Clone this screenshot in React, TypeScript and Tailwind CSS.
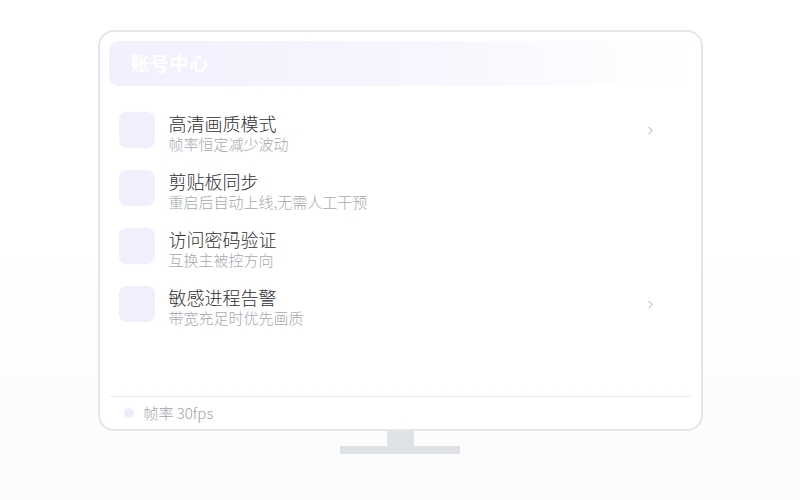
import { ChevronRight } from 'lucide-react';

type Item = { title: string; desc: string; arrow: boolean };

const items: Item[] = [
  { title: '高清画质模式', desc: '帧率恒定减少波动', arrow: true },
  { title: '剪贴板同步', desc: '重启后自动上线,无需人工干预', arrow: false },
  { title: '访问密码验证', desc: '互换主被控方向', arrow: false },
  { title: '敏感进程告警', desc: '带宽充足时优先画质', arrow: true },
];

const font = { fontFamily: '"Noto Sans CJK SC", "Noto Sans", sans-serif' };

const Row = ({ item }: { item: Item }) => (
  <div className="flex items-start gap-[14px] pl-[10px] pr-[35px]">
    <div className="w-[36px] h-[36px] rounded-[8px] bg-[#f2effd] shrink-0" />
    <div className="flex-1 flex flex-col font-light">
      <div className="text-[18px] leading-[22px] text-[#2f3136]">{item.title}</div>
      <div className="text-[15px] leading-[20px] text-[#a6a9b0]">{item.desc}</div>
    </div>
    {item.arrow && (
      <div className="h-[36px] flex items-center">
        <ChevronRight className="w-[13px] h-[13px] text-[#8f939a]" strokeWidth={1.5} />
      </div>
    )}
  </div>
);

export default function App() {
  return (
    <div className="w-[800px] h-[500px] bg-gradient-to-b from-white via-white to-[#fbfbfc] flex flex-col items-center pt-[30px]" style={font}>
      <div className="w-[605px] h-[401px] rounded-[16px] border-2 border-[#e4e6ea] bg-white px-[9px] pt-[9px] flex flex-col">
        <div className="h-[45px] rounded-[10px] bg-gradient-to-r from-[#f3f0fe] via-[#f7f5fe] to-white flex items-center justify-between px-[22px]">
          <span className="text-[19px] font-bold text-white tracking-[0.5px]">账号中心</span>
          <span className="text-[15px] text-white mr-[10px]">设置</span>
        </div>
        <div className="flex flex-col gap-[16px] mt-[26px]">
          {items.map((it) => (
            <Row key={it.title} item={it} />
          ))}
        </div>
        <div className="mt-auto border-t border-[#eceef1] mx-[1px] h-[33px] flex items-center gap-[10px] pl-[14px]">
          <div className="w-[10px] h-[10px] rounded-full bg-[#efecfc]" />
          <span className="text-[15px] font-light text-[#a0a3aa]">帧率 30fps</span>
        </div>
      </div>
      <div className="w-[27px] h-[15px] bg-[#dfe3e8]" />
      <div className="w-[120px] h-[8px] bg-[#dfe3e8]" />
    </div>
  );
}
